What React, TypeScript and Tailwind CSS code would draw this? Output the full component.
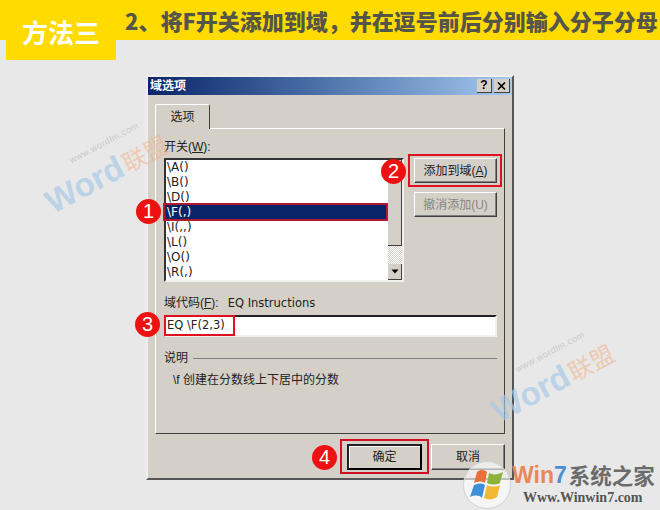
const cjk = 'font-["Liberation_Sans","Noto_Sans_CJK_SC",sans-serif]';
const ui = 'font-["DejaVu_Sans","Noto_Sans_CJK_SC",sans-serif]';

const switches = ['\\A()', '\\B()', '\\D()', '\\F(,)', '\\I(,,)', '\\L()', '\\O()', '\\R(,)'];

function Marker({ n, className }: { n: number; className: string }) {
  return (
    <div
      className={`absolute w-[25px] h-[25px] rounded-full bg-[#ee1111] text-white text-[20px] leading-[25px] text-center font-["Liberation_Sans",sans-serif] ${className}`}
    >
      {n}
    </div>
  );
}

function Watermark({ className }: { className: string }) {
  return (
    <div className={`absolute w-[170px] h-[60px] -rotate-[28deg] pointer-events-none whitespace-nowrap ${className}`}>
      <div className='ml-[40px] h-[14px] text-[9px] leading-[12px] tracking-[0.5px] text-[#c9c9c9] font-["Liberation_Sans",sans-serif]'>www.wordlm.com</div>
      <div className="flex items-center">
        <span className='text-[33px] leading-[40px] font-bold text-[#a9c8e6]/70 font-["Liberation_Sans",sans-serif]'>Word</span>
        <span className='ml-[2px] text-[24px] leading-[40px] text-[#f0b48c]/60 font-["Noto_Sans_CJK_SC",sans-serif]'>联盟</span>
      </div>
    </div>
  );
}

function WinButton({ label, disabled, primary, className }: { label: React.ReactNode; disabled?: boolean; primary?: boolean; className: string }) {
  return (
    <div
      className={`flex items-center justify-center text-[12px] ${
        primary
          ? 'border-2 border-t-[#222] border-l-[#222] border-r-black border-b-black shadow-[inset_1px_1px_0_#fff]'
          : 'border border-t-white border-l-white border-r-[#404040] border-b-[#404040] shadow-[inset_-1px_-1px_0_#808080]'
      } ${disabled ? 'text-[#8a8780]' : 'text-[#222]'} ${className}`}
    >
      {label}
    </div>
  );
}

export default function App() {
  return (
    <div className="relative w-[660px] h-[510px] overflow-hidden bg-[#e8e8e8]">
      {/* top band */}
      <div className='h-[40px] bg-[#ffdb00] pl-[125px] text-[22px] leading-[40px] font-black text-[#55554a] whitespace-nowrap font-["Noto_Sans_CJK_SC",sans-serif]'>
        2、将F开关添加到域，并在逗号前后分别输入分子分母
      </div>
      <div className='absolute left-[6px] top-[0px] w-[110px] h-[60px] pt-[14px] text-center bg-[#ffdb00] text-white text-[26px] leading-[36px] font-bold font-["Noto_Sans_CJK_SC",sans-serif]'>
        方法三
      </div>

      {/* dialog */}
      <div className={`ml-[146px] mt-[35px] w-[368px] h-[405px] bg-[#d4d0c8] border-2 border-t-[#f0eee8] border-l-[#f0eee8] border-r-[#555] border-b-[#555] ${cjk}`}>
        <div className="h-[18px] flex items-center justify-between pl-[2px] pr-[2px] bg-gradient-to-r from-[#0a246a] to-[#a6caf0]">
          <span className="text-[12px] font-bold text-white leading-none">域选项</span>
          <div className="flex gap-[2px]">
            <div className="w-[15px] h-[14px] bg-[#d4d0c8] border-r border-b border-r-[#404040] border-b-[#404040] text-[12px] leading-[13px] text-center font-bold text-black">?</div>
            <div className="w-[16px] h-[14px] bg-[#d4d0c8] border-r border-b border-r-[#404040] border-b-[#404040] flex items-center justify-center">
              <svg width="9" height="8" viewBox="0 0 9 8"><path d="M1 0.5L8 7.5M8 0.5L1 7.5" stroke="#000" strokeWidth="1.6" /></svg>
            </div>
          </div>
        </div>

        <div className="ml-[7px] mt-[9px] relative z-10 w-[55px] h-[25px] bg-[#d4d0c8] border-t border-l border-r border-t-white border-l-white border-r-[#404040] rounded-t-[2px] text-[12px] text-[#222] text-center leading-[24px]">
          选项
        </div>

        <div className="ml-[7px] -mt-[1px] w-[350px] h-[306px] border border-t-white border-l-white border-r-[#404040] border-b-[#404040] pl-[8px] pt-[10px]">
          <div className="h-[16px] text-[12px] leading-[16px] text-[#222]">开关(<span className="underline">W</span>):</div>

          <div className="mt-[3px] flex">
            <div className="w-[240px] h-[124px] flex bg-white border-2 border-t-[#333] border-l-[#333] border-r-[#f2f0ec] border-b-[#f2f0ec]">
              <div className={`w-[222px] h-[120px] overflow-hidden text-[12px] leading-[15px] text-[#222] ${ui}`}>
                {switches.map((s) => (
                  <div key={s} className={`h-[15px] pl-[1px] ${s === '\\F(,)' ? 'bg-[#0a246a] text-white' : ''}`}>{s}</div>
                ))}
              </div>
              <div className="w-[14px] flex flex-col">
                <div className="h-[86px] bg-[#d4d0c8] border-r border-b border-r-[#404040] border-b-[#404040]" />
                <div className="flex-1 bg-[repeating-conic-gradient(#d4d0c8_0_25%,#ffffff_0_50%)] bg-[length:2px_2px]" />
                <div className="h-[16px] bg-[#d4d0c8] border-r border-b border-r-[#404040] border-b-[#404040] flex items-center justify-center">
                  <svg width="8" height="5" viewBox="0 0 8 5"><path d="M0.5 0.5H7.5L4 4.5Z" fill="#000" /></svg>
                </div>
              </div>
            </div>
            <div className="ml-[10px] flex flex-col gap-[9px]">
              <WinButton className="w-[83px] h-[25px]" label={<span>添加到域(<span className="underline">A</span>)</span>} />
              <WinButton className="w-[83px] h-[25px]" disabled label="撤消添加(U)" />
            </div>
          </div>

          <div className="mt-[13px] h-[16px] flex text-[12px] leading-[16px] text-[#222]">
            <span>域代码(<span className="underline">F</span>):</span>
            <span className={`ml-[9px] text-[11.5px] ${ui}`}>EQ Instructions</span>
          </div>

          <div className={`mt-[4px] w-[333px] h-[22px] bg-white border-2 border-t-[#222] border-l-[#808080] border-r-[#f2f0ec] border-b-[#f2f0ec] pl-[1px] text-[11.5px] leading-[17px] text-[#222] ${ui}`}>
            {'EQ \\F(2,3)'}
          </div>

          <div className="mt-[13px] w-[333px] h-[16px] flex items-center gap-[5px] text-[12px] text-[#222]">
            <span>说明</span>
            <div className="flex-1 h-[1px] bg-[#808080]" />
          </div>

          <div className="mt-[6px] pl-[9px] h-[16px] text-[12px] leading-[16px] text-[#222]">{'\\f 创建在分数线上下居中的分数'}</div>
        </div>

        <div className="mt-[10px] pr-[7px] flex justify-end gap-[9px]">
          <WinButton primary className="w-[75px] h-[26px]" label="确定" />
          <WinButton className="w-[74px] h-[26px]" label="取消" />
        </div>
      </div>

      {/* annotations */}
      <div className="absolute left-[163px] top-[203px] w-[225px] h-[18px] border-2 border-[#b01a30]" />
      <div className="absolute left-[408px] top-[154px] w-[94px] h-[33px] border-2 border-[#e01020]" />
      <div className="absolute left-[164px] top-[315px] w-[71px] h-[21px] border-2 border-[#e01020]" />
      <div className="absolute left-[340px] top-[439px] w-[89px] h-[35px] border-2 border-[#d01020]" />
      <Marker n={1} className="left-[136px] top-[199px]" />
      <Marker n={2} className="left-[381px] top-[159px]" />
      <Marker n={3} className="left-[135px] top-[312px]" />
      <Marker n={4} className="left-[312px] top-[445px]" />

      <Watermark className="left-[36px] top-[131px]" />
      <Watermark className="left-[482px] top-[340px]" />

      {/* site logo */}
      <div className="absolute left-[463px] top-[461px] w-[48px] h-[48px] rounded-full bg-white/60 border border-[#cfd4d8] flex items-center justify-center">
        <svg width="36" height="34" viewBox="0 0 36 34">
          <path d="M8 4C12 1 16 2 18 4L16 15C13 13 9 13 5 15Z" fill="#e8703a" />
          <path d="M20 5C24 7 28 7 34 4L31 15C27 17 22 17 18 15Z" fill="#8db33c" />
          <path d="M5 17C9 15 13 15 16 17L13 30C10 27 6 27 1 29Z" fill="#3f8fd8" />
          <path d="M18 17C22 19 27 19 31 17L28 29C24 32 19 32 15 30Z" fill="#f2b933" />
        </svg>
      </div>
      <div className="absolute left-[512px] top-[462px]">
        <div className="flex items-center h-[26px] whitespace-nowrap">
          <span className='text-[23px] leading-[26px] font-bold font-["Liberation_Sans",sans-serif]'>
            <span className="text-[#e8875a]">Win</span><span className="text-[#4a8fd0]">7</span>
          </span>
          <span className='ml-[2px] text-[21.5px] leading-[26px] font-bold text-[#6b6b6b] font-["Noto_Sans_CJK_SC",sans-serif]'>系统之家</span>
        </div>
        <div className='ml-[11px] mt-[2px] text-[14px] leading-[16px] font-bold text-[#555] font-["Liberation_Serif",serif]'>Www.Winwin7.com</div>
      </div>
    </div>
  );
}
